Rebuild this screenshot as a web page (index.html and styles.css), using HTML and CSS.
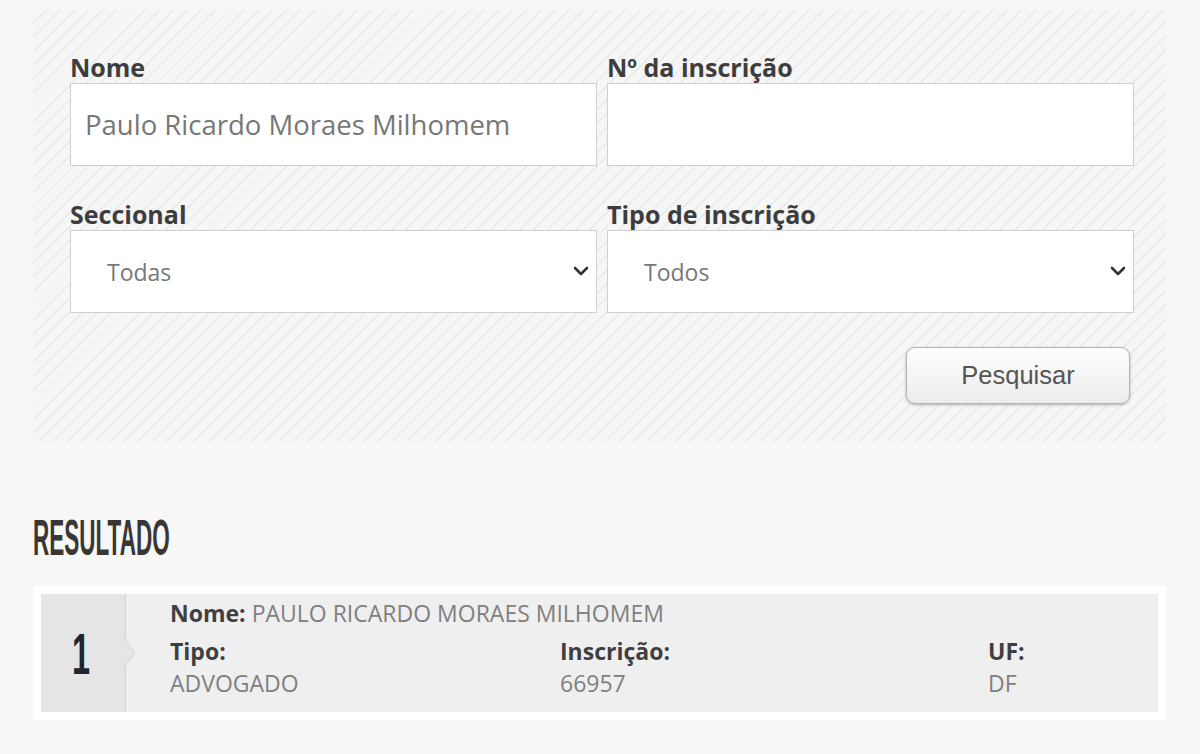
FILE: index.html
```html
<!DOCTYPE html>
<html lang="pt-BR">
<head>
<meta charset="utf-8">
<title>Consulta Nacional</title>
<link rel="stylesheet" href="styles.css">
</head>
<body>
<div class="page">
  <form class="search">
    <div class="grid">
      <div class="field">
        <label class="label">Nome</label>
        <input class="input" type="text" value="Paulo Ricardo Moraes Milhomem">
      </div>
      <div class="field">
        <label class="label">Nº da inscrição</label>
        <input class="input" type="text" value="">
      </div>
      <div class="field">
        <label class="label">Seccional</label>
        <div class="select-wrap">
          <select class="select"><option>Todas</option></select>
          <svg class="chev" width="16" height="10" viewBox="0 0 16 10"><path d="M2 2 L8 8 L14 2" fill="none" stroke="#333" stroke-width="2.6" stroke-linecap="round" stroke-linejoin="round"/></svg>
        </div>
      </div>
      <div class="field">
        <label class="label">Tipo de inscrição</label>
        <div class="select-wrap">
          <select class="select"><option>Todos</option></select>
          <svg class="chev" width="16" height="10" viewBox="0 0 16 10"><path d="M2 2 L8 8 L14 2" fill="none" stroke="#333" stroke-width="2.6" stroke-linecap="round" stroke-linejoin="round"/></svg>
        </div>
      </div>
    </div>
    <div class="actions">
      <button class="btn" type="button">Pesquisar</button>
    </div>
  </form>

  <h2 class="heading"><span class="condensed">RESULTADO</span></h2>

  <div class="card">
    <div class="card-inner">
      <div class="num">
        <span class="num-text">1</span>
        <svg class="notch" width="14" height="30" viewBox="0 0 14 30"><path d="M0.5 0 L12 15 L0.5 30" fill="#e5e5e5" stroke="#d2d2d2" stroke-width="1"/></svg>
      </div>
      <div class="info">
        <div class="row-name"><b>Nome:</b> PAULO RICARDO MORAES MILHOMEM</div>
        <div class="cols">
          <div><b>Tipo:</b><span>ADVOGADO</span></div>
          <div><b>Inscrição:</b><span>66957</span></div>
          <div><b>UF:</b><span>DF</span></div>
        </div>
      </div>
    </div>
  </div>
</div>
</body>
</html>
```
FILE: styles.css
```css
html, body {
  margin: 0;
  padding: 0;
}
body {
  background: #f7f7f7;
  font-family: "Open Sans", "Noto Sans", sans-serif;
  color: #444;
}
.page {
  padding: 10px 34px 0 33px;
}
.search {
  margin: 0;
  height: 432px;
  box-sizing: border-box;
  padding: 42px 32px 0 37px;
  background: repeating-linear-gradient(135deg, #f6f6f6 0px, #f6f6f6 8.6px, #e9e9e9 8.6px, #e9e9e9 10px);
}
.grid {
  display: grid;
  grid-template-columns: 527px 527px;
  column-gap: 10px;
  row-gap: 33px;
}
.field {
  display: flex;
  flex-direction: column;
}
.label {
  font-size: 25px;
  line-height: 30px;
  font-weight: 700;
  color: #3d3d3d;
  margin-bottom: 1px;
}
.input, .select {
  box-sizing: border-box;
  width: 527px;
  height: 83px;
  margin: 0;
  border: 1px solid #cfcfcf;
  background: #fff;
  font-family: "Open Sans", "Noto Sans", sans-serif;
  outline: none;
}
.input {
  padding: 0 14px;
  font-size: 27.5px;
  color: #777;
}
.select-wrap {
  position: relative;
}
.select {
  -webkit-appearance: none;
  appearance: none;
  padding: 0 0 0 36px;
  font-size: 23px;
  color: #777;
}
.chev {
  position: absolute;
  right: 8px;
  top: 36px;
}
.actions {
  display: flex;
  justify-content: flex-end;
  margin-top: 34px;
  padding-right: 4px;
}
.btn {
  width: 224px;
  height: 57px;
  border: 1px solid #b3b3b3;
  border-radius: 9px;
  background: linear-gradient(#fefefe, #ececec);
  box-shadow: 0 1px 3px rgba(0,0,0,0.28);
  font-family: "Liberation Sans", Arial, sans-serif;
  font-size: 25.5px;
  color: #555;
  padding: 0;
}
.heading {
  margin: 68px 0 0 0;
  height: 76px;
  font-weight: 700;
}
.condensed {
  display: inline-block;
  font-family: "Liberation Sans", Arial, sans-serif;
  font-size: 50px;
  line-height: 56px;
  color: #393633;
  transform: scaleX(0.45);
  transform-origin: left center;
}
.card {
  width: 1133px;
  box-sizing: border-box;
  padding: 8px;
  background: #fff;
}
.card-inner {
  display: flex;
  height: 118px;
  background: #efefef;
}
.num {
  position: relative;
  width: 84px;
  flex: none;
  background: #e5e5e5;
  border-right: 1px solid #d2d2d2;
  display: flex;
  align-items: center;
  justify-content: center;
}
.num-text {
  display: inline-block;
  font-family: "Liberation Sans", Arial, sans-serif;
  font-weight: 700;
  font-size: 58px;
  line-height: 58px;
  color: #22252b;
  transform: scaleX(0.56);
  margin-top: 2px;
  margin-left: -4px;
}
.notch {
  position: absolute;
  right: -12px;
  top: 44px;
}
.info {
  flex: 1;
  padding: 3px 0 0 44px;
  font-size: 23px;
  line-height: 32px;
  color: #808080;
}
.info b {
  color: #3f3f3f;
  font-weight: 700;
}
.row-name {
  margin-bottom: 6px;
}
.cols {
  display: grid;
  grid-template-columns: 390px 428px 1fr;
}
.cols div {
  display: flex;
  flex-direction: column;
}
```
